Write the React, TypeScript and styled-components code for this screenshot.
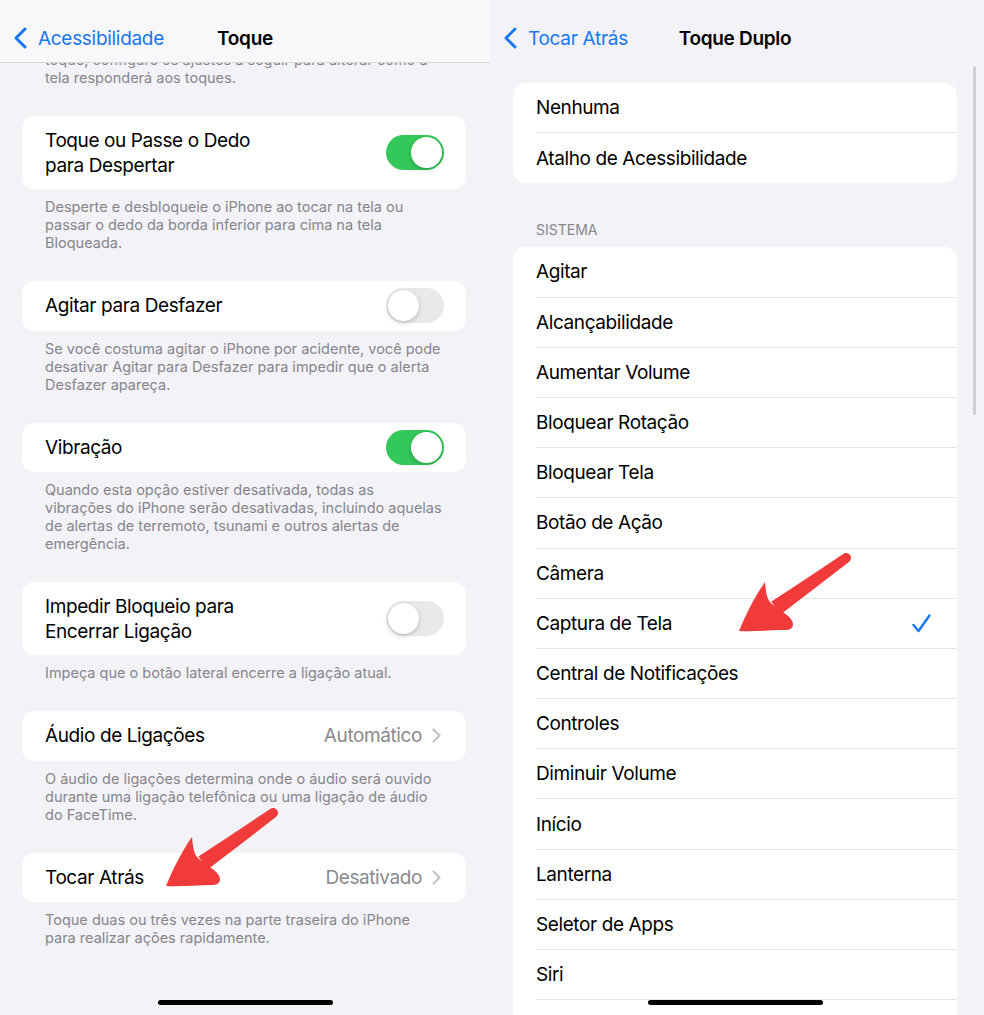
import React from "react";
import styled, { createGlobalStyle } from "styled-components";

const GlobalStyle = createGlobalStyle`
  html, body {
    margin: 0;
    padding: 0;
    background: #f2f2f7;
  }
  body {
    font-family: Inter, "Noto Sans", "Liberation Sans", sans-serif;
    -webkit-font-smoothing: antialiased;
  }
`;

const BLUE = "#1877f2";

type Setting = {
  label: string[];
  toggle?: boolean;
  value?: string;
  footer: string[];
};

const settings: Setting[] = [
  {
    label: ["Toque ou Passe o Dedo", "para Despertar"],
    toggle: true,
    footer: [
      "Desperte e desbloqueie o iPhone ao tocar na tela ou",
      "passar o dedo da borda inferior para cima na tela",
      "Bloqueada.",
    ],
  },
  {
    label: ["Agitar para Desfazer"],
    toggle: false,
    footer: [
      "Se você costuma agitar o iPhone por acidente, você pode",
      "desativar Agitar para Desfazer para impedir que o alerta",
      "Desfazer apareça.",
    ],
  },
  {
    label: ["Vibração"],
    toggle: true,
    footer: [
      "Quando esta opção estiver desativada, todas as",
      "vibrações do iPhone serão desativadas, incluindo aquelas",
      "de alertas de terremoto, tsunami e outros alertas de",
      "emergência.",
    ],
  },
  {
    label: ["Impedir Bloqueio para", "Encerrar Ligação"],
    toggle: false,
    footer: ["Impeça que o botão lateral encerre a ligação atual."],
  },
  {
    label: ["Áudio de Ligações"],
    value: "Automático",
    footer: [
      "O áudio de ligações determina onde o áudio será ouvido",
      "durante uma ligação telefônica ou uma ligação de áudio",
      "do FaceTime.",
    ],
  },
  {
    label: ["Tocar Atrás"],
    value: "Desativado",
    footer: [
      "Toque duas ou três vezes na parte traseira do iPhone",
      "para realizar ações rapidamente.",
    ],
  },
];

const topOptions = ["Nenhuma", "Atalho de Acessibilidade"];
const systemOptions = [
  "Agitar",
  "Alcançabilidade",
  "Aumentar Volume",
  "Bloquear Rotação",
  "Bloquear Tela",
  "Botão de Ação",
  "Câmera",
  "Captura de Tela",
  "Central de Notificações",
  "Controles",
  "Diminuir Volume",
  "Início",
  "Lanterna",
  "Seletor de Apps",
  "Siri",
  "Spotlight",
];

const Lines = ({ lines }: { lines: string[] }) => (
  <>
    {lines.map((l, i) => (
      <React.Fragment key={i}>
        {i > 0 && <br />}
        {l}
      </React.Fragment>
    ))}
  </>
);

const BackChevron = () => (
  <svg width="13" height="22" viewBox="0 0 13 22" fill="none">
    <path d="M11 2 L2 11 L11 20" stroke={BLUE} strokeWidth="3" strokeLinecap="round" strokeLinejoin="round" />
  </svg>
);

const Disclosure = () => (
  <svg width="9" height="15" viewBox="0 0 9 15" fill="none">
    <path d="M1.5 1.5 L7.5 7.5 L1.5 13.5" stroke="#c4c4c7" strokeWidth="2.2" strokeLinecap="round" strokeLinejoin="round" />
  </svg>
);

const Check = () => (
  <svg width="19" height="19" viewBox="0 0 19 19" fill="none">
    <path d="M1.5 11 L6.5 17 L17.5 1.5" stroke={BLUE} strokeWidth="2.4" strokeLinecap="round" strokeLinejoin="round" />
  </svg>
);

// hand-drawn style annotation arrow, tail top-right, tip bottom-left
const RedArrow = () => (
  <svg width="122" height="86" viewBox="0 0 122 86">
    <path
      d="M109.1 3.9 Q 75 27 37.4 51.5 L 46.6 64.5 Q 80 39 114.9 12.1 A 5 5 0 0 0 109.1 3.9 Z"
      fill="#f13b3b"
    />
    <path
      d="M5 81 C 13 62 21 46 31 32 C 32 43 33 50 38 54 L 47 61 C 54 65 59 70 59 74 C 59 79 55 80 50 80 C 36 80 20 82 5 81 Z"
      fill="#f13b3b"
    />
  </svg>
);

export default function App() {
  return (
    <>
      <GlobalStyle />
      <Screens>
        <Panel>
          <NavBar $frosted>
            <BackLink>
              <BackChevron />
              <span>Acessibilidade</span>
            </BackLink>
            <NavTitle>Toque</NavTitle>
            <span />
          </NavBar>
          <Scroll $top={0} $inset={22}>
            <Footer $clipped>
              <Lines lines={["toque, configure os ajustes a seguir para alterar como a", "tela responderá aos toques."]} />
            </Footer>
            {settings.map((s, i) => (
              <React.Fragment key={i}>
                <Card>
                  <SettingRow>
                    <Label>
                      <Lines lines={s.label} />
                    </Label>
                    {s.toggle !== undefined && (
                      <Toggle $on={s.toggle}>
                        <Knob />
                      </Toggle>
                    )}
                    {s.value && (
                      <Detail>
                        <span>{s.value}</span>
                        <Disclosure />
                      </Detail>
                    )}
                  </SettingRow>
                </Card>
                <Footer>
                  <Lines lines={s.footer} />
                </Footer>
              </React.Fragment>
            ))}
          </Scroll>
          <Annotation $left={161} $top={805}>
            <RedArrow />
          </Annotation>
          <HomeIndicator />
        </Panel>

        <Panel>
          <NavBar>
            <BackLink>
              <BackChevron />
              <span>Tocar Atrás</span>
            </BackLink>
            <NavTitle>Toque Duplo</NavTitle>
            <span />
          </NavBar>
          <Scroll $top={20} $inset={23}>
            <Card>
              {topOptions.map((o) => (
                <OptionRow key={o}>
                  <OptionBody>{o}</OptionBody>
                </OptionRow>
              ))}
            </Card>
            <GroupHeader>Sistema</GroupHeader>
            <Card>
              {systemOptions.map((o) => (
                <OptionRow key={o}>
                  <OptionBody>
                    <span>{o}</span>
                    {o === "Captura de Tela" && <Check />}
                  </OptionBody>
                </OptionRow>
              ))}
            </Card>
          </Scroll>
          <ScrollThumb />
          <Annotation $left={244} $top={550}>
            <RedArrow />
          </Annotation>
          <HomeIndicator />
        </Panel>
      </Screens>
    </>
  );
}

const Screens = styled.div`
  display: flex;
  width: 984px;
  height: 1015px;
  overflow: hidden;
  background: #f2f2f7;
`;

const Panel = styled.section`
  position: relative;
  flex: 0 0 490px;
  height: 1015px;
  overflow: hidden;
  display: flex;
  flex-direction: column;
  background: #f2f2f7;
`;

const NavBar = styled.header<{ $frosted?: boolean }>`
  position: relative;
  z-index: 2;
  flex: 0 0 63px;
  box-sizing: border-box;
  padding-top: 14px;
  display: grid;
  grid-template-columns: 1fr auto 1fr;
  align-items: center;
  background: ${(p) => (p.$frosted ? "rgba(248, 248, 250, 0.96)" : "#f2f2f7")};
  border-bottom: 1px solid ${(p) => (p.$frosted ? "#d9d9dd" : "transparent")};
`;

const BackLink = styled.div`
  display: flex;
  align-items: center;
  gap: 11px;
  padding-left: 14px;
  color: ${BLUE};
  font-size: 19px;
  letter-spacing: -0.3px;
  white-space: nowrap;
`;

const NavTitle = styled.div`
  font-size: 19px;
  font-weight: 600;
  color: #000;
  letter-spacing: -0.3px;
  white-space: nowrap;
`;

const Scroll = styled.div<{ $top: number; $inset: number }>`
  flex: 1;
  overflow: hidden;
  display: flex;
  flex-direction: column;
  padding: ${(p) => p.$top}px 0 0 ${(p) => p.$inset}px;
`;

const Card = styled.div`
  flex-shrink: 0;
  width: 444px;
  background: #fff;
  border-radius: 12px;
  overflow: hidden;
`;

const SettingRow = styled.div`
  display: flex;
  align-items: center;
  justify-content: space-between;
  min-height: 49.5px;
  box-sizing: border-box;
  padding: 0 22px 0 23px;
`;

const Label = styled.div`
  padding: 11.5px 0;
  font-size: 19px;
  line-height: 25px;
  color: #000;
  letter-spacing: -0.4px;
`;

const Detail = styled.div`
  display: flex;
  align-items: center;
  gap: 10px;
  padding-right: 3px;
  font-size: 19px;
  color: #8a8a8e;
  letter-spacing: -0.4px;
`;

const Toggle = styled.div<{ $on: boolean }>`
  flex-shrink: 0;
  width: 58px;
  height: 35px;
  border-radius: 18px;
  box-sizing: border-box;
  padding: 2px;
  display: flex;
  justify-content: ${(p) => (p.$on ? "flex-end" : "flex-start")};
  background: ${(p) => (p.$on ? "#34c759" : "#e9e9eb")};
`;

const Knob = styled.div`
  width: 31px;
  height: 31px;
  border-radius: 50%;
  background: #fff;
  box-shadow: 0 2px 5px rgba(0, 0, 0, 0.18), 0 0 1px rgba(0, 0, 0, 0.12);
`;

const Footer = styled.p<{ $clipped?: boolean }>`
  flex-shrink: 0;
  margin: ${(p) => (p.$clipped ? "-12px" : "0")} 0 29px;
  padding: ${(p) => (p.$clipped ? "0" : "9px")} 23px 0;
  font-size: 14.5px;
  line-height: 18px;
  color: #86868b;
  white-space: nowrap;
`;

const GroupHeader = styled.div`
  margin: 39px 0 9px;
  padding: 0 23px;
  font-size: 14px;
  line-height: 16px;
  color: #86868b;
  text-transform: uppercase;
`;

const OptionRow = styled.div`
  height: 50.2px;
  padding-left: 23px;
  display: flex;
`;

const OptionBody = styled.div`
  flex: 1;
  display: flex;
  align-items: center;
  justify-content: space-between;
  padding-right: 26px;
  border-bottom: 1px solid #e4e4e7;
  font-size: 19px;
  color: #000;
  letter-spacing: -0.4px;

  ${OptionRow}:last-child & {
    border-bottom: none;
  }
`;

const ScrollThumb = styled.div`
  position: absolute;
  top: 66px;
  right: 4px;
  width: 3.5px;
  height: 349px;
  border-radius: 2px;
  background: #cfcfd3;
`;

const Annotation = styled.div<{ $left: number; $top: number }>`
  position: absolute;
  z-index: 3;
  left: ${(p) => p.$left}px;
  top: ${(p) => p.$top}px;
  line-height: 0;
`;

const HomeIndicator = styled.div`
  position: absolute;
  z-index: 3;
  left: 50%;
  bottom: 10px;
  width: 175px;
  height: 5px;
  margin-left: -87.5px;
  border-radius: 3px;
  background: #000;
`;
